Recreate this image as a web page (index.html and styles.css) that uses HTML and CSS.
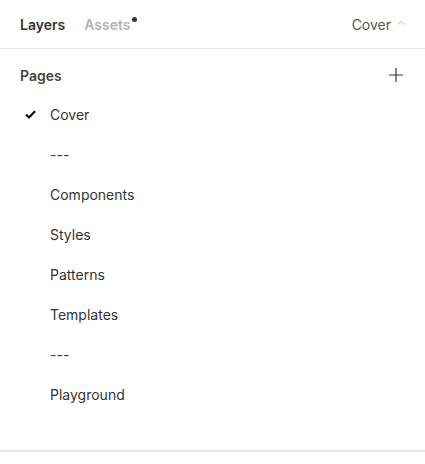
FILE: index.html
```html
<!DOCTYPE html>
<html>
<head>
<meta charset="utf-8">
<link rel="stylesheet" href="styles.css">
</head>
<body>
<div class="panel">
  <header class="tabs">
    <div class="tab-group">
      <span class="tab active">Layers</span>
      <span class="tab muted">Assets<span class="dot"></span></span>
    </div>
    <div class="page-select">
      <span>Cover</span>
      <svg class="chev" width="8" height="5" viewBox="0 0 8 5"><path d="M1 4.5 L4 1.5 L7 4.5" fill="none" stroke="#b3b3b3" stroke-width="1"/></svg>
    </div>
  </header>
  <section class="pages">
    <div class="pages-head">
      <span class="pages-title">Pages</span>
      <svg class="plus" width="14" height="14" viewBox="0 0 14 14"><path d="M7 0 V14 M0 7 H14" stroke="#333" stroke-width="1.2"/></svg>
    </div>
    <ul class="page-list">
      <li class="page current"><svg class="check" width="11" height="9" viewBox="0 0 11 9"><path d="M1 4.5 L4 7.5 L10 1.2" fill="none" stroke="#000" stroke-width="2"/></svg><span>Cover</span></li>
      <li class="page"><span>---</span></li>
      <li class="page"><span>Components</span></li>
      <li class="page"><span>Styles</span></li>
      <li class="page"><span>Patterns</span></li>
      <li class="page"><span>Templates</span></li>
      <li class="page"><span>---</span></li>
      <li class="page"><span>Playground</span></li>
    </ul>
  </section>
</div>
</body>
</html>
```
FILE: styles.css
```css
html, body { margin: 0; padding: 0; background: #fff; }
body { font-family: Inter, "Noto Sans", sans-serif; color: #333; }
.panel { width: 425px; height: 452px; border-bottom: 2px solid #e6e6e6; box-sizing: border-box; }
.tabs { height: 49px; border-bottom: 1px solid #e6e6e6; display: flex; align-items: center; justify-content: space-between; padding: 0 20px; box-sizing: border-box; }
.tab-group { display: flex; gap: 19px; }
.tab { font-size: 14px; font-weight: 600; position: relative; }
.tab.active { color: #333; }
.tab.muted { color: #b3b3b3; }
.dot { position: absolute; width: 5px; height: 5px; border-radius: 50%; background: #333; right: -6px; top: 1px; }
.page-select { display: flex; align-items: center; gap: 6px; font-size: 14px; color: #555; }
.chev { margin-top: -4px; }
.pages { padding-top: 16px; }
.pages-head { display: flex; justify-content: space-between; align-items: center; padding: 0 22px 0 20px; height: 20px; }
.pages-title { font-size: 14px; font-weight: 600; color: #444; }
.page-list { list-style: none; margin: 0; padding: 9px 0 0 0; }
.page { height: 40px; display: flex; align-items: center; padding-left: 50px; position: relative; font-size: 14px; color: #333; }
.check { position: absolute; left: 25px; top: 16px; }
```
